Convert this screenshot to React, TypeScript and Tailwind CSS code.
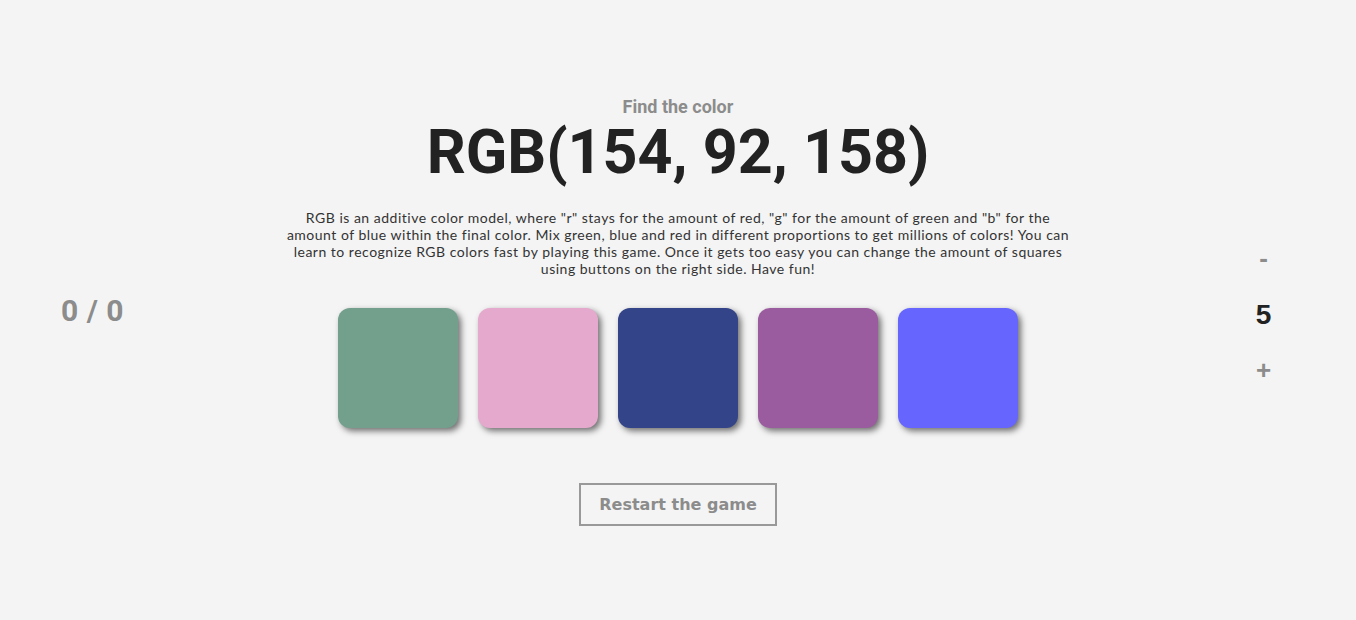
const SQUARES = ['#739f8d', '#e5a9cd', '#334488', '#9a5c9e', '#6666ff']

export default function App() {
  return (
    <div className="flex min-h-screen items-center bg-[#f4f4f4] font-['Roboto',sans-serif]">
      <div className="flex w-[185px] shrink-0 justify-center">
        <div className="text-[30px] font-bold tracking-[0.5px] text-[#8c8c8c]">0 / 0</div>
      </div>

      <div className="flex flex-1 flex-col items-center pt-[1px]">
        <div className="text-[18px] leading-[22px] font-bold text-[#8c8c8c]">Find the color</div>
        <h1 className="mt-[4px] text-[61px] leading-none font-bold text-[#222]">RGB(154, 92, 158)</h1>
        <p className="mt-[26px] max-w-[784px] text-center font-['Lato',sans-serif] text-[14px] leading-[17px] tracking-[0.5px] text-[#333]">
          RGB is an additive color model, where "r" stays for the amount of red, "g" for the amount of green and "b" for
          the amount of blue within the final color. Mix green, blue and red in different proportions to get millions of
          colors! You can learn to recognize RGB colors fast by playing this game. Once it gets too easy you can change
          the amount of squares using buttons on the right side. Have fun!
        </p>
        <div className="mt-[31px] flex gap-5">
          {SQUARES.map((c) => (
            <button
              key={c}
              type="button"
              className="h-[120px] w-[120px] rounded-xl shadow-[3px_3px_6px_rgba(0,0,0,0.55)]"
              style={{ background: c }}
            />
          ))}
        </div>
        <button
          type="button"
          className="mt-[55px] h-[43px] w-[198px] border-2 border-[#999] pt-[2px] font-['DejaVu_Sans',sans-serif] text-[16px] font-bold text-[#8c8c8c]"
        >
          Restart the game
        </button>
      </div>

      <div className="flex w-[185px] shrink-0 flex-col items-center pt-[8px] font-['Liberation_Sans',sans-serif]">
        <button type="button" className="text-[26px] leading-none font-bold text-[#8c8c8c]">
          -
        </button>
        <div className="mt-[30px] text-[28px] leading-none font-bold text-[#222]">5</div>
        <button type="button" className="mt-[28px] text-[26px] leading-none font-bold text-[#8c8c8c]">
          +
        </button>
      </div>
    </div>
  )
}
